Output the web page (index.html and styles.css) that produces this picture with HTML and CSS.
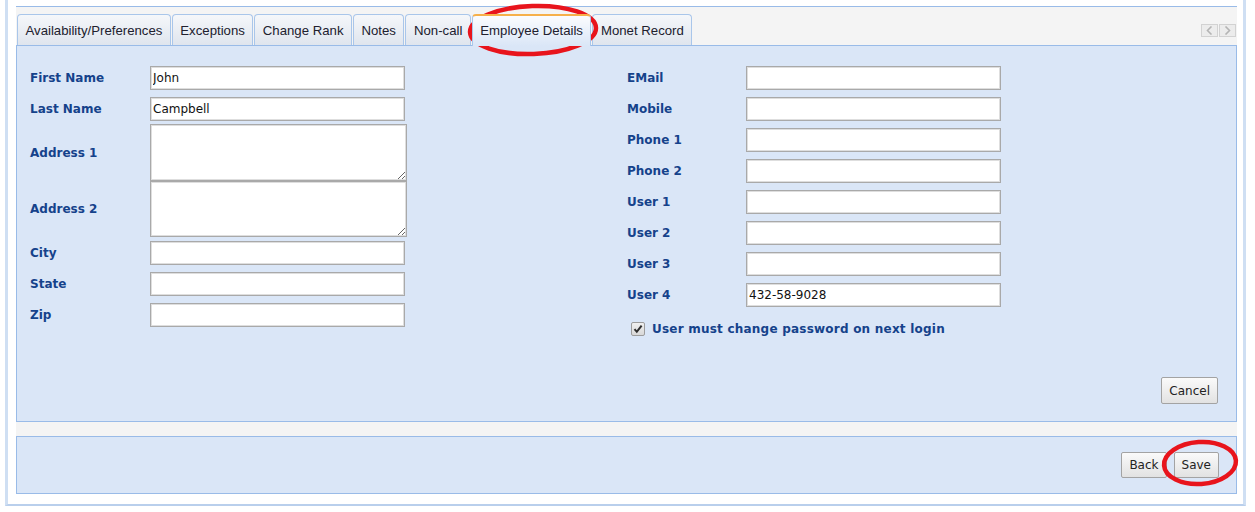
FILE: index.html
```html
<!DOCTYPE html>
<html lang="en">
<head>
    <meta charset="UTF-8">
    <title>Employee Details</title>
    <link rel="stylesheet" href="styles.css">
</head>
<body>
    <div class="frame">
        <div class="frame-inner">
            <div class="tabstrip">
                <ul class="tabs">
                    <li class="tab">Availability/Preferences</li>
                    <li class="tab">Exceptions</li>
                    <li class="tab">Change Rank</li>
                    <li class="tab">Notes</li>
                    <li class="tab">Non-call</li>
                    <li class="tab active">Employee Details</li>
                    <li class="tab">Monet Record</li>
                </ul>
                <div class="scroller">
                    <span class="scroll-btn"><svg width="9" height="9" viewBox="0 0 9 9"><path d="M6.5 0.5 L2.5 4.5 L6.5 8.5" fill="none" stroke="#b4b4b4" stroke-width="1.6"/></svg></span>
                    <span class="scroll-btn"><svg width="9" height="9" viewBox="0 0 9 9"><path d="M2.5 0.5 L6.5 4.5 L2.5 8.5" fill="none" stroke="#b4b4b4" stroke-width="1.6"/></svg></span>
                </div>
            </div>

            <div class="panel details">
                <div class="form-cols">
                    <div class="col">
                        <div class="row"><label>First Name</label><input type="text" value="John"></div>
                        <div class="row tight"><label>Last Name</label><input type="text" value="Campbell"></div>
                        <div class="row flush"><label>Address 1</label><textarea class="addr1"></textarea></div>
                        <div class="row near"><label>Address 2</label><textarea class="addr2"></textarea></div>
                        <div class="row"><label>City</label><input type="text"></div>
                        <div class="row"><label>State</label><input type="text"></div>
                        <div class="row"><label>Zip</label><input type="text"></div>
                    </div>
                    <div class="col right">
                        <div class="row"><label>EMail</label><input type="text"></div>
                        <div class="row"><label>Mobile</label><input type="text"></div>
                        <div class="row"><label>Phone 1</label><input type="text"></div>
                        <div class="row"><label>Phone 2</label><input type="text"></div>
                        <div class="row"><label>User 1</label><input type="text"></div>
                        <div class="row"><label>User 2</label><input type="text"></div>
                        <div class="row"><label>User 3</label><input type="text"></div>
                        <div class="row"><label>User 4</label><input type="text" value="432-58-9028"></div>
                        <div class="check-row">
                            <span class="checkbox"><svg width="12" height="12" viewBox="0 0 12 12"><path d="M2.5 6.2 L4.8 8.8 L9.6 2.6" fill="none" stroke="#2e2e2e" stroke-width="2"/></svg></span>
                            <span class="check-label">User must change password on next login</span>
                        </div>
                    </div>
                </div>
                <div class="panel-foot">
                    <button class="btn">Cancel</button>
                </div>
            </div>

            <div class="panel toolbar">
                <button class="btn">Back</button>
                <button class="btn">Save</button>
            </div>
        </div>
    </div>

    <!-- red marks drawn over the screenshot -->
    <svg class="marks" width="1255" height="512" viewBox="0 0 1255 512">
        <ellipse cx="533" cy="30" rx="63" ry="24" fill="none" stroke="#e8141c" stroke-width="4.5" transform="rotate(-2 533 30)"/>
        <ellipse cx="1200" cy="463" rx="36" ry="21" fill="none" stroke="#e8141c" stroke-width="4.5" transform="rotate(-4 1200 463)"/>
    </svg>
</body>
</html>
```

FILE: styles.css
```css
body {
    margin: 0;
    position: relative;
    background: #fff;
    font-family: "DejaVu Sans", Verdana, sans-serif;
    font-size: 12px;
    color: #222;
}
.frame {
    margin-left: 5px;
    width: 1241px;
    box-sizing: border-box;
    padding: 6px 6px 10px 8px;
    border-left: 3px solid #cfdff3;
    border-right: 3px solid #cfdff3;
    border-bottom: 2px solid #b9cfec;
    background: #fff;
}
.frame-inner {
    background: #f4f4f4;
}

/* tabs */
.tabstrip {
    display: flex;
    height: 39px;
    box-sizing: border-box;
    border-top: 1px solid #99bbe8;
    padding-left: 1px;
}
.tabs {
    display: flex;
    align-items: flex-end;
    gap: 1px;
    list-style: none;
    margin: 0;
    padding: 0;
}
.tab {
    height: 31px;
    box-sizing: border-box;
    padding: 0 7.5px;
    border: 1px solid #a9c6ea;
    border-bottom: none;
    border-radius: 4px 4px 0 0;
    background: linear-gradient(#f5f7fa, #dfe5ee);
    font-family: "Liberation Sans", Arial, sans-serif;
    font-size: 13.2px;
    line-height: 31px;
    color: #20202e;
    white-space: nowrap;
}
.tab.active {
    position: relative;
    z-index: 1;
    height: 32px;
    margin-bottom: -1px;
    border-top: 2px solid #f6b04a;
    line-height: 29px;
    background: linear-gradient(#fbfcfe, #dae6f7);
}
.scroller {
    display: flex;
    gap: 1px;
    margin: 17px 1px 0 auto;
    height: 13px;
}
.scroll-btn {
    width: 17px;
    height: 13px;
    box-sizing: border-box;
    border: 1px solid #d2d2d2;
    background: #ececec;
    display: flex;
    align-items: center;
    justify-content: center;
}

/* panels */
.panel {
    border: 1px solid #99bbe8;
    background: #dae6f7;
    box-sizing: border-box;
}
.details {
    height: 377px;
    display: flex;
    flex-direction: column;
    padding: 20px 0 0 13px;
}
.form-cols {
    display: grid;
    grid-template-columns: 597px 1fr;
}
.row {
    display: flex;
    align-items: center;
    margin-bottom: 7px;
}
.row.tight { margin-bottom: 3px; }
.row.flush { margin-bottom: 0; }
.row.near { margin-bottom: 4px; }
.row label {
    width: 120px;
    font-weight: bold;
    color: #15428b;
}
.right .row label { width: 119px; }
input, textarea {
    width: 255px;
    box-sizing: border-box;
    border: 1px solid #a9a9a9;
    box-shadow: inset 0 0 0 1px #dedede;
    background: #fff;
    font-family: "DejaVu Sans", Verdana, sans-serif;
    font-size: 12px;
    color: #111;
    margin: 0;
}
input {
    height: 24px;
    padding: 0 2px;
}
textarea {
    width: 257px;
    padding: 2px;
    resize: both;
}
.addr1 { height: 57px; }
.addr2 { height: 56px; }
.check-row {
    display: flex;
    align-items: center;
    margin: 15px 0 0 4px;
}
.checkbox {
    width: 14px;
    height: 14px;
    box-sizing: border-box;
    border: 1px solid #9c9c9c;
    border-radius: 2px;
    background: linear-gradient(#f0f0f0, #d8d8d8);
    display: flex;
    align-items: center;
    justify-content: center;
    margin-right: 7px;
}
.check-label {
    font-weight: bold;
    color: #15428b;
    letter-spacing: 0.22px;
}
.panel-foot {
    margin-top: auto;
    display: flex;
    justify-content: flex-end;
    padding: 0 18px 17px 0;
}
.toolbar {
    margin-top: 14px;
    height: 58px;
    display: flex;
    align-items: center;
    justify-content: flex-end;
    gap: 7px;
    padding-right: 17px;
}
.btn {
    height: 27px;
    padding: 0 7px;
    border: 1px solid #a3a3a3;
    border-radius: 2px;
    background: linear-gradient(#fafafa, #e2e2e2);
    font-family: "DejaVu Sans", Verdana, sans-serif;
    font-size: 12px;
    color: #222;
}
.toolbar .btn { height: 26px; }
.marks {
    position: absolute;
    top: 0;
    left: 0;
    pointer-events: none;
}
```
